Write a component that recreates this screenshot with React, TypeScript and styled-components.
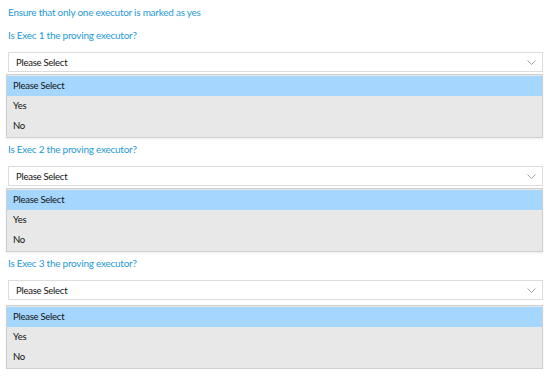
import React from 'react'
import styled, { createGlobalStyle } from 'styled-components'

const GlobalStyle = createGlobalStyle`
  html, body {
    margin: 0;
    padding: 0;
    background: #fff;
  }
  body {
    font-family: Lato, 'Open Sans', sans-serif;
    font-size: 9.5px;
    letter-spacing: -0.25px;
    color: #111;
  }
`

type Question = {
  label: string
  listGap: number
}

const questions: Array<Question> = [
  { label: 'Is Exec 1 the proving executor?', listGap: 2 },
  { label: 'Is Exec 2 the proving executor?', listGap: 2 },
  { label: 'Is Exec 3 the proving executor?', listGap: 5 },
]

const options = ['Please Select', 'Yes', 'No']

const Chevron: React.FC = () => (
  <svg width="9" height="5" viewBox="0 0 9 5" fill="none">
    <path d="M0.5 0.5 L4.5 4.5 L8.5 0.5" stroke="#999" strokeWidth="0.9" />
  </svg>
)

const App: React.FC = () => {
  return (
    <Page>
      <GlobalStyle />
      <Title>Ensure that only one executor is marked as yes</Title>
      {questions.map((q, i) => (
        <Block key={i}>
          <Heading>{q.label}</Heading>
          <Select>
            <span>Please Select</span>
            <Chevron />
          </Select>
          <List gap={q.listGap}>
            {options.map((opt, j) => (
              <Option key={j} selected={j === 0}>
                {opt}
              </Option>
            ))}
          </List>
        </Block>
      ))}
    </Page>
  )
}

export default App

const Page = styled.div`
  width: 552px;
  padding: 4px 9px 0 6px;
  box-sizing: border-box;
`

const Heading = styled.div`
  height: 16px;
  line-height: 16px;
  padding-left: 2px;
  color: #1f9ad6;
  font-size: 10px;
`

const Title = styled(Heading)`
  margin-bottom: 4px;
`

const Block = styled.div`
  display: flex;
  flex-direction: column;
  padding-top: 3px;
`

const Select = styled.div`
  display: flex;
  align-items: center;
  justify-content: space-between;
  box-sizing: border-box;
  height: 20px;
  margin: 9px 0 0 2px;
  padding: 0 6px 0 7px;
  border: 1px solid #dcdcdc;
  background: #fff;
`

const List = styled.div<{ gap: number }>`
  margin-top: ${(p) => p.gap}px;
  box-sizing: border-box;
  border: 1px solid #cfcfcf;
  background: #e8e8e8;
  padding: 1px 0;
  box-shadow: 0 1px 2px rgba(0, 0, 0, 0.08);
`

const Option = styled.div<{ selected: boolean }>`
  height: 20px;
  line-height: 20px;
  padding-left: 6px;
  background: ${(p) => (p.selected ? '#a5d6fd' : 'transparent')};
`
